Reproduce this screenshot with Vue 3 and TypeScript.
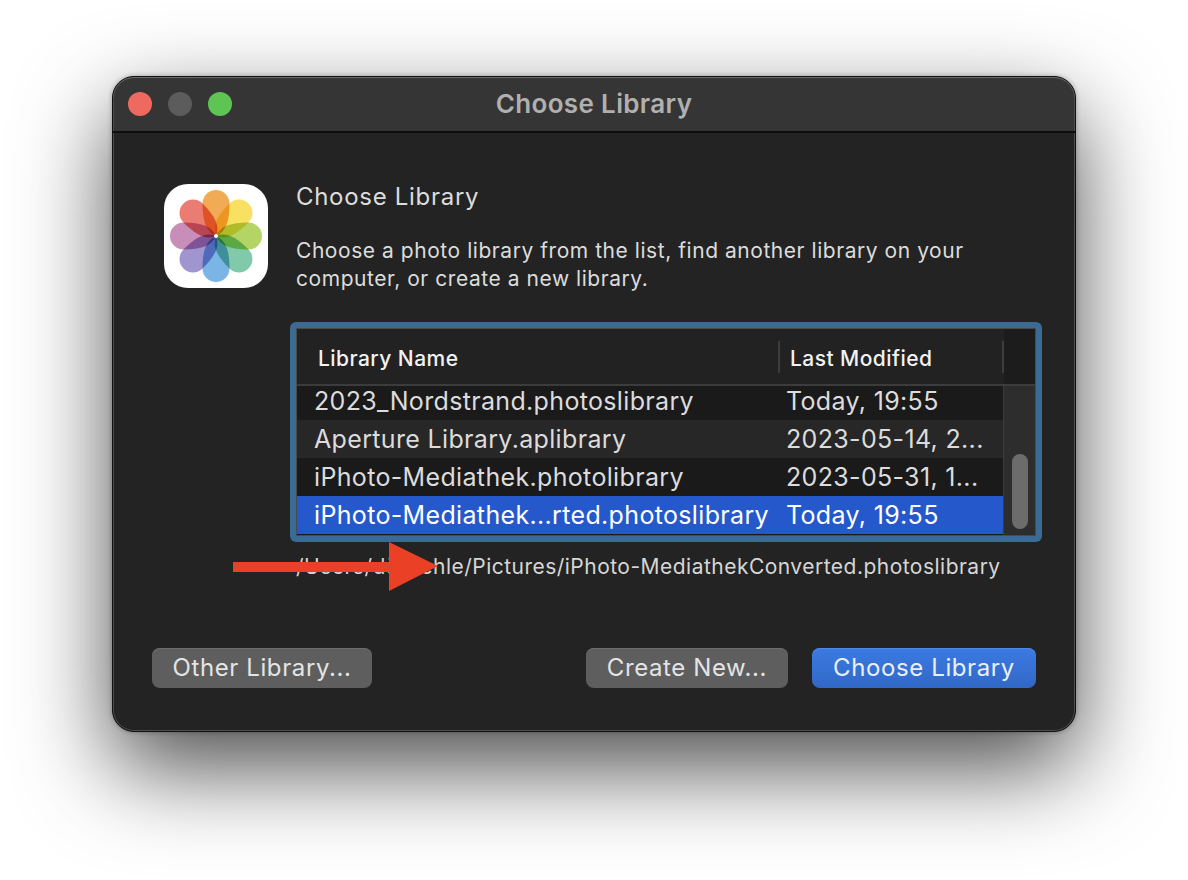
<script setup lang="ts">
type LibraryRow = { name: string; modified: string; selected?: boolean };

const rows: LibraryRow[] = [
  { name: '2023_Nordstrand.photoslibrary', modified: 'Today, 19:55' },
  { name: 'Aperture Library.aplibrary', modified: '2023-05-14, 2...' },
  { name: 'iPhoto-Mediathek.photolibrary', modified: '2023-05-31, 1...' },
  { name: 'iPhoto-Mediathek...rted.photoslibrary', modified: 'Today, 19:55', selected: true },
];

const petals = [
  { angle: 0, color: '#f0a03c' },
  { angle: 45, color: '#f7dc4c' },
  { angle: 90, color: '#aacf50' },
  { angle: 135, color: '#70c2a0' },
  { angle: 180, color: '#68abe2' },
  { angle: 225, color: '#9486ca' },
  { angle: 270, color: '#c07eb0' },
  { angle: 315, color: '#e96a60' },
];
</script>

<template>
  <div class="page">
    <div class="window">
      <div class="titlebar">
        <span class="light red"></span>
        <span class="light gray"></span>
        <span class="light green"></span>
        <span class="title">Choose Library</span>
      </div>

      <div class="content">
        <div class="intro">
          <div class="app-icon">
            <svg width="104" height="104" viewBox="-52 -52 104 104">
              <path
                v-for="p in petals"
                :key="p.angle"
                class="petal"
                d="M0 0 C-10 -4 -13.5 -15 -13.5 -32.5 A13.5 13.5 0 0 1 13.5 -32.5 C13.5 -15 10 -4 0 0 Z"
                :fill="p.color"
                :transform="`rotate(${p.angle})`"
              />
              <circle r="2" fill="#fff" />
            </svg>
          </div>
          <div class="intro-text">
            <div class="heading">Choose Library</div>
            <p class="desc">Choose a photo library from the list, find another library on your computer, or create a new library.</p>
          </div>
        </div>

        <div class="table-ring">
          <div class="table">
            <div class="thead">
              <div class="th th-name">Library Name</div>
              <div class="th th-date">Last Modified</div>
              <div class="th-corner"></div>
            </div>
            <div class="tbody">
              <div class="rows">
                <div
                  v-for="(row, i) in rows"
                  :key="row.name"
                  class="row"
                  :class="{ alt: i % 2 === 1, selected: row.selected, clipped: i === 0 }"
                >
                  <span class="cell-name">{{ row.name }}</span>
                  <span class="cell-date">{{ row.modified }}</span>
                </div>
              </div>
              <div class="scrollbar"><div class="thumb"></div></div>
            </div>
          </div>
        </div>

        <div class="path">
          /Users/dürnehle/Pictures/iPhoto-MediathekConverted.photoslibrary
          <svg class="arrow" width="206" height="50" viewBox="0 0 206 50">
            <path d="M0 20H156V0L205 24L156 49V30H0Z" fill="#ea4025" />
          </svg>
        </div>

        <div class="actions">
          <button class="btn other">Other Library...</button>
          <button class="btn create">Create New...</button>
          <button class="btn primary">Choose Library</button>
        </div>
      </div>
    </div>
  </div>
</template>

<style scoped>
.page {
  width: 1188px;
  height: 880px;
  padding: 76px 112px 0;
  box-sizing: border-box;
  background: #fff;
  font-family: Inter, "Liberation Sans", sans-serif;
  overflow: hidden;
}

.window {
  width: 964px;
  height: 656px;
  box-sizing: border-box;
  background: #232323;
  border-radius: 22px;
  border: 1px solid #111;
  box-shadow: inset 0 0 0 1px #4d4d4d, 0 36px 92px rgba(0, 0, 0, 0.7), 0 0 5px rgba(0, 0, 0, 0.3);
  overflow: hidden;
}

.titlebar {
  position: relative;
  height: 56px;
  box-sizing: border-box;
  display: flex;
  align-items: center;
  gap: 16px;
  padding-left: 15px;
  background: #353535;
  border-bottom: 2px solid #0e0e0e;
  border-radius: 21px 21px 0 0;
  box-shadow: inset 0 1px 0 #6a6a6a, inset 1px 0 0 #4d4d4d, inset -1px 0 0 #4d4d4d;
}

.light {
  width: 24px;
  height: 24px;
  border-radius: 50%;
}
.red { background: #ee6a5f; }
.gray { background: #5c5c5c; }
.green { background: #5ec454; }

.title {
  position: absolute;
  left: 0;
  right: 0;
  padding-bottom: 2px;
  text-align: center;
  color: #b0b0b0;
  font-size: 26px;
  font-weight: 600;
  letter-spacing: 0.35px;
}

.content {
  padding: 51px 39px 0 51px;
}

.intro {
  display: flex;
  gap: 28px;
}

.app-icon {
  width: 104px;
  height: 104px;
  border-radius: 24px;
  background: #fff;
  flex: none;
  isolation: isolate;
}
.petal {
  mix-blend-mode: multiply;
  opacity: 0.88;
}

.heading {
  margin-top: -1px;
  color: #dcdcdc;
  font-size: 24px;
  line-height: 28px;
  letter-spacing: 0.7px;
}

.desc {
  margin: 26px 0 0;
  width: 700px;
  color: #dcdcdc;
  font-size: 21px;
  line-height: 28px;
  letter-spacing: 0.55px;
}

.table-ring {
  margin: 29px 0 0 126px;
  width: 752px;
  height: 220px;
  box-sizing: border-box;
  padding: 6px;
  border-radius: 6px;
  background: #3b6a95;
}

.table {
  height: 100%;
  box-sizing: border-box;
  border: 1px solid #4a4a4a;
  background: #1a1a1a;
  display: flex;
  flex-direction: column;
}

.thead {
  height: 57px;
  flex: none;
  box-sizing: border-box;
  display: flex;
  align-items: center;
  background: #222;
  border-bottom: 2px solid #3c3c3c;
  color: #f2f2f2;
  font-size: 21px;
  font-weight: 500;
  letter-spacing: 0.45px;
}
.th {
  height: 32px;
  padding-top: 3px;
  display: flex;
  align-items: center;
  box-sizing: border-box;
}
.th-name {
  width: 483px;
  padding-left: 21px;
  border-right: 2px solid #3d3d3d;
}
.th-date {
  width: 224px;
  padding-left: 10px;
  border-right: 2px solid #3d3d3d;
}
.th-corner {
  flex: 1;
  align-self: stretch;
  background: #1c1c1c;
}

.tbody {
  flex: 1;
  display: flex;
  min-height: 0;
}
.rows {
  width: 706px;
  flex: none;
}
.row {
  height: 38px;
  box-sizing: border-box;
  display: flex;
  align-items: center;
  background: #1a1a1a;
  color: #dcdcdc;
  font-size: 25px;
  letter-spacing: 0.34px;
  white-space: nowrap;
}
.row.clipped {
  height: 34px;
  padding-bottom: 4px;
}
.row.alt { background: #272727; }
.row.selected {
  background: #2559cb;
  color: #fff;
}
.cell-name {
  width: 489px;
  padding-left: 17px;
  flex: none;
  box-sizing: border-box;
}

.scrollbar {
  flex: 1;
  background: #2d2d2d;
  border-left: 1px solid #3c3c3c;
  display: flex;
  flex-direction: column;
  justify-content: flex-end;
  align-items: center;
  padding-bottom: 6px;
}
.thumb {
  width: 16px;
  height: 75px;
  border-radius: 8px;
  background: #6c6c6c;
}

.path {
  position: relative;
  margin: 10px 0 0 132px;
  color: #d6d6d6;
  font-size: 21px;
  line-height: 30px;
  letter-spacing: 0.48px;
  white-space: nowrap;
}
.arrow {
  position: absolute;
  left: -63px;
  top: -10px;
}

.actions {
  display: flex;
  margin-top: 66px;
}
.btn {
  height: 40px;
  box-sizing: border-box;
  border: 0;
  border-radius: 8px;
  background: #5e5e5e;
  box-shadow: inset 0 1px 0 #6e6e6e;
  color: #e4e4e4;
  font-family: inherit;
  font-size: 24px;
  letter-spacing: 0.6px;
  padding: 0 0 2px;
}
.other { width: 220px; margin-left: -12px; }
.create { width: 202px; margin-left: 214px; }
.primary {
  width: 224px;
  margin-left: 24px;
  background: linear-gradient(#3b7ae2, #3168c6);
  box-shadow: inset 0 1px 0 #4f89e6;
  color: #eaf0fb;
}
</style>
